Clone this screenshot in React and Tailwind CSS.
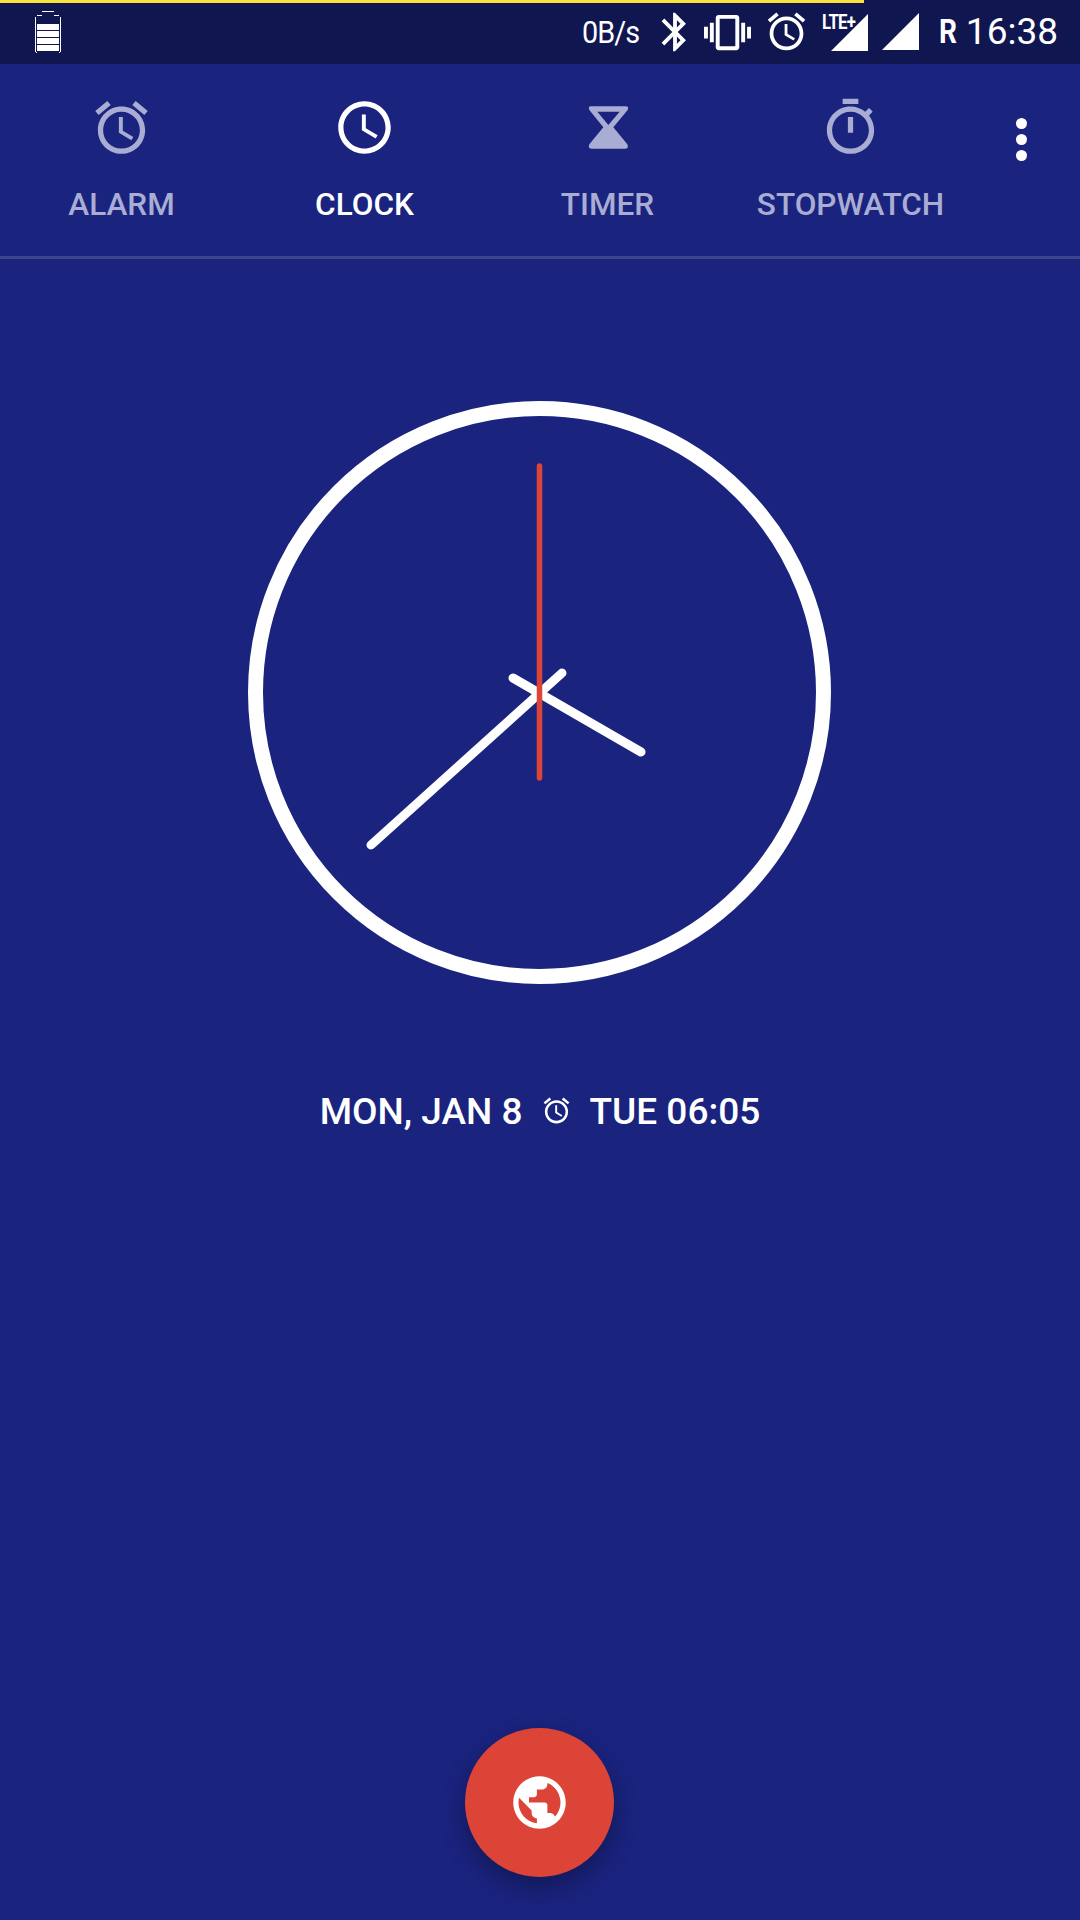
const ALARM_D = 'M22 5.72l-4.6-3.86-1.29 1.53 4.6 3.86L22 5.72zM7.88 3.39L6.6 1.86 2 5.71l1.29 1.53 4.59-3.85zM12.5 8H11v6l4.75 2.85.75-1.23-4-2.37V8zM12 4c-4.97 0-9 4.03-9 9s4.03 9 9 9 9-4.03 9-9-4.03-9-9-9zm0 16c-3.87 0-7-3.13-7-7s3.13-7 7-7 7 3.13 7 7-3.13 7-7 7z'
const CLOCK_D = 'M11.99 2C6.47 2 2 6.48 2 12s4.47 10 9.99 10C17.52 22 22 17.52 22 12S17.52 2 11.99 2zM12 20c-4.42 0-8-3.58-8-8s3.58-8 8-8 8 3.58 8 8-3.58 8-8 8zm.5-13H11v6l5.25 3.15.75-1.23-4.5-2.67z'
const TIMER_D = 'M15 1H9v2h6V1zm-4 13h2V8h-2v6zm8.03-6.61l1.42-1.42c-.43-.51-.9-.99-1.41-1.41l-1.42 1.42C16.07 4.74 14.12 4 12 4c-4.97 0-9 4.03-9 9s4.02 9 9 9 9-4.03 9-9c0-2.12-.74-4.07-1.97-5.61zM12 20c-3.87 0-7-3.13-7-7s3.13-7 7-7 7 3.13 7 7-3.13 7-7 7z'
const BT_D = 'M17.71 7.71L12 2h-1v7.59L6.41 5 5 6.41 10.59 12 5 17.59 6.41 19 11 14.41V22h1l5.71-5.71-4.3-4.29 4.3-4.29zM13 5.83l1.88 1.88L13 9.59V5.83zm1.88 10.46L13 18.17v-3.76l1.88 1.88z'
const VIB_D = 'M0 15h2V9H0v6zm3 2h2V7H3v10zm19-8v6h2V9h-2zm-3 8h2V7h-2v10zM16.5 3h-9C6.67 3 6 3.67 6 4.5v15c0 .83.67 1.5 1.5 1.5h9c.83 0 1.5-.67 1.5-1.5v-15c0-.83-.67-1.5-1.5-1.5zM16 19H8V5h8v14z'
const PUBLIC_D = 'M12 2C6.48 2 2 6.48 2 12s4.48 10 10 10 10-4.48 10-10S17.52 2 12 2zm-1 17.93c-3.95-.49-7-3.85-7-7.93 0-.62.08-1.21.21-1.79L9 15v1c0 1.1.9 2 2 2v1.93zm6.9-2.54c-.26-.81-1-1.39-1.9-1.39h-1v-3c0-.55-.45-1-1-1H8v-2h2c.55 0 1-.45 1-1V7h2c1.1 0 2-.9 2-2v-.41c2.93 1.19 5 4.06 5 7.41 0 2.08-.8 3.97-2.1 5.39z'

function Icon({ d, className }) {
  return (
    <svg viewBox="0 0 24 24" fill="currentColor" className={className}>
      <path d={d} />
    </svg>
  )
}

function HourglassIcon({ className }) {
  return (
    <svg viewBox="7 3 180 189" className={className}>
      <path
        fill="currentColor"
        fillRule="evenodd"
        d="M46 34H150Q161 34 156 45L113 97L155 148Q160 161 150 161H47Q36 161 41 148L83 97L41 45Q36 34 46 34ZM65 50L98 90L132 50Z"
      />
    </svg>
  )
}

function BatteryIcon() {
  return (
    <svg viewBox="0 0 26 42" className="w-[26px] h-[42px] ml-[35px] mt-[11px]">
      <g fill="#fff">
        <rect x="7" y="0" width="12" height="1" />
        <rect x="2" y="4" width="5" height="1" />
        <rect x="19" y="4" width="5" height="1" />
        <rect x="0" y="6" width="1" height="35" />
        <rect x="25" y="6" width="1" height="35" />
        <rect x="2" y="13" width="22" height="6" />
        <rect x="2" y="20" width="22" height="6" />
        <rect x="2" y="27" width="22" height="6" />
        <rect x="2" y="34" width="22" height="6" />
        <rect x="1" y="41" width="1" height="1" />
        <rect x="24" y="41" width="1" height="1" />
      </g>
    </svg>
  )
}

function StatusBar() {
  return (
    <div className="relative h-16 bg-[#10164f] flex items-start text-white">
      <div className="absolute left-0 top-0 h-[3px] w-[864px] bg-[#fbe13c]" />
      <BatteryIcon />
      <div className="ml-auto flex items-start pr-[22px]">
        <span className="w-[58px] mt-[12px] text-[32px] leading-[40px] tracking-[-1px] whitespace-nowrap scale-x-90 origin-left">0B/s</span>
        <Icon d={BT_D} className="w-[46px] h-[46px] ml-[12px] mt-[9px]" />
        <Icon d={VIB_D} className="w-[47px] h-[47px] ml-[6px] mt-[9px]" />
        <Icon d={ALARM_D} className="w-[45px] h-[45px] ml-[13px] mt-[9px]" />
        <div className="relative w-[46px] h-[38px] ml-[13px] mt-[13px]">
          <svg viewBox="0 0 37 37" className="absolute right-0 bottom-0 w-[37px] h-[37px]">
            <path d="M37 0V37H0Z" fill="#fff" />
          </svg>
          <span className="absolute left-0 top-0 text-[21px] leading-[18px] font-bold tracking-[-1px] scale-x-[.8] origin-left">LTE+</span>
        </div>
        <svg viewBox="0 0 37 37" className="w-[37px] h-[37px] ml-[14px] mt-[13px]">
          <path d="M37 0V37H0Z" fill="#fff" />
        </svg>
        <span className="w-[17px] ml-[20px] mt-[12px] text-[33px] leading-[40px] font-bold scale-x-[.85] origin-left">R</span>
        <span className="ml-[10px] mt-[12px] text-[37px] leading-[40px]">16:38</span>
      </div>
    </div>
  )
}

const TABS = [
  { label: 'ALARM', d: ALARM_D },
  { label: 'CLOCK', d: CLOCK_D, active: true },
  { label: 'TIMER', hourglass: true },
  { label: 'STOPWATCH', d: TIMER_D },
]

function TabBar() {
  return (
    <div className="h-[195px] border-b-[3px] border-[#3d4591] flex">
      {TABS.map((tab) => (
        <div
          key={tab.label}
          className={`w-[243px] flex flex-col items-center pt-8 ${tab.active ? 'text-white' : 'text-[#a9add4]'}`}
        >
          {tab.hourglass
            ? <HourglassIcon className="w-[60px] h-[63px]" />
            : <Icon d={tab.d} className="w-[63px] h-[63px]" />}
          <span className="mt-[27px] text-[31.5px] leading-[38px] font-medium whitespace-nowrap">{tab.label}</span>
        </div>
      ))}
      <div className="flex-1 flex flex-col items-center gap-[5px] pt-[54px] pr-[9px]">
        <span className="w-[11px] h-[11px] rounded-full bg-white" />
        <span className="w-[11px] h-[11px] rounded-full bg-white" />
        <span className="w-[11px] h-[11px] rounded-full bg-white" />
      </div>
    </div>
  )
}

function ClockFace() {
  return (
    <svg viewBox="0 0 583 583" className="w-[583px] h-[583px] mr-[1px]">
      <circle cx="291.5" cy="291.5" r="284" fill="none" stroke="#fff" strokeWidth="15" />
      <g stroke="#fff" strokeWidth="9" strokeLinecap="round">
        <line x1="265" y1="277" x2="393" y2="351" />
        <line x1="123" y1="444" x2="314" y2="272" />
      </g>
      <line x1="291.5" y1="65" x2="291.5" y2="377" stroke="#db4437" strokeWidth="5.5" strokeLinecap="round" />
    </svg>
  )
}

export default function App() {
  return (
    <div className="w-[1080px] h-[1920px] flex flex-col bg-[#1a237e] font-['Roboto',sans-serif] overflow-hidden">
      <StatusBar />
      <TabBar />
      <div className="flex-1 flex flex-col items-center pt-[142px]">
        <ClockFace />
        <div className="mt-[104px] flex items-center text-white text-[37px] leading-[48px] font-medium">
          <span>MON, JAN 8</span>
          <Icon d={ALARM_D} className="w-[31px] h-[31px] mx-[18px] mb-[4px]" />
          <span>TUE 06:05</span>
        </div>
        <button className="mt-auto mb-[43px] mr-[1px] w-[149px] h-[149px] rounded-full bg-[#db4437] text-white flex items-center justify-center shadow-[0_10px_24px_rgba(0,0,0,0.3)]">
          <Icon d={PUBLIC_D} className="w-[63px] h-[63px]" />
        </button>
      </div>
    </div>
  )
}
